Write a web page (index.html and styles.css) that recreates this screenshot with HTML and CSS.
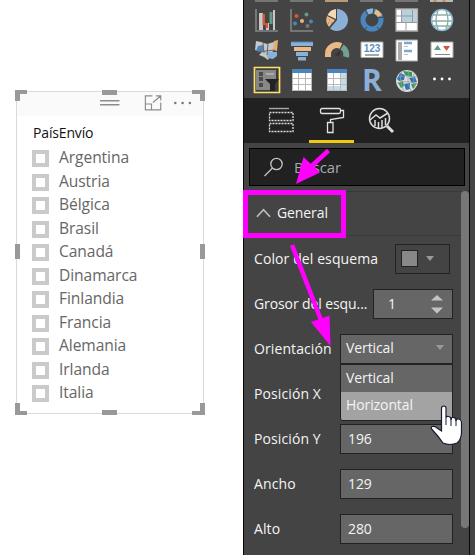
FILE: index.html
```html
<!DOCTYPE html>
<html lang="es">
<head>
<meta charset="utf-8">
<title>Formato</title>
<link rel="stylesheet" href="styles.css">
</head>
<body>
<div class="app">
  <main class="canvas">
    <section class="slicer">
      <header class="slicer-bar">
        <svg width="106" height="22" viewBox="0 0 106 22" fill="none" stroke="#8c8c8c">
          <path d="M0 7.700H20M0 11.800H20" stroke-width="1.400"/>
          <path d="M54 2.700H46.700V17H62.500V9.500M46.700 11H53V17M54.500 9.500L62 3M57.500 2.700H62.500V7.500" stroke-width="1.200"/>
          <g fill="#777" stroke="none"><circle cx="77.500" cy="10" r="1.300"/><circle cx="85" cy="10" r="1.300"/><circle cx="92.500" cy="10" r="1.300"/></g>
        </svg>
      </header>
      <h1 class="slicer-title">PaísEnvío</h1>
      <ul class="options">
        <li><i class="box"></i><span>Argentina</span></li>
        <li><i class="box"></i><span>Austria</span></li>
        <li><i class="box"></i><span>Bélgica</span></li>
        <li><i class="box"></i><span>Brasil</span></li>
        <li><i class="box"></i><span>Canadá</span></li>
        <li><i class="box"></i><span>Dinamarca</span></li>
        <li><i class="box"></i><span>Finlandia</span></li>
        <li><i class="box"></i><span>Francia</span></li>
        <li><i class="box"></i><span>Alemania</span></li>
        <li><i class="box"></i><span>Irlanda</span></li>
        <li><i class="box"></i><span>Italia</span></li>
      </ul>
      <svg class="handles" width="190" height="325" viewBox="0 0 190 325" fill="#999">
        <path d="M0 0H12V4H5V11H0ZM177 0H190V11H185V4H177ZM0 313H5V321H12V325H0ZM185 313H190V325H177V321H185ZM87 0H102V5H87ZM87 320H102V325H87ZM0 154H5V169H0ZM185 154H190V169H185Z"/>
      </svg>
    </section>
  </main>

  <aside class="pane">
    <div class="gallery">
      <svg class="sliver" width="210" height="3" viewBox="0 0 210 3">
        <path d="M6 1H29M41 1H64M111 1H134M146 1H169" stroke="#858585" stroke-width="1.500"/>
        <path d="M76 1H99" stroke="#b99b78" stroke-width="2"/><path d="M181 1H204" stroke="#b9b9b9" stroke-width="2"/><path d="M186 0V2M195 0V2" stroke="#c88d54" stroke-width="3"/>
      </svg>
      <svg viewBox="-14 -14 28 28"><path d="M-11-11V11H11" fill="none" stroke="#858585" stroke-width="1.600"/><path d="M-8-7H-4V10H-8ZM6-10H8V10H6ZM-1 3H2V10H-1Z" fill="#c8c8c8"/><path d="M-4.500-6H-2V3H1V8H-1.500V5H-4.500Z" fill="#d3573c"/><path d="M2.500-8H5.500V4H2.500Z" fill="#609c86"/></svg>
      <svg viewBox="-14 -14 28 28"><path d="M-11-11V11H11" fill="none" stroke="#858585" stroke-width="1.600"/><circle cx="-5.500" cy="-4" r="2" fill="#d3573c"/><circle cx="9" cy="1.500" r="2" fill="#4a86bd"/><circle cx="4.500" cy="-5.500" r="2" fill="#609c86"/><circle cx="0" cy="1" r="2" fill="#e6b982"/><circle cx="-7" cy="3.500" r="2" fill="#4a86bd"/><circle cx="5.500" cy="6" r="2" fill="#777"/></svg>
      <svg viewBox="-14 -14 28 28"><path d="M0 0V-11A11 11 0 1 1-7 8.500Z" fill="#8bb0d8"/><path d="M-1-1L-9.500-5A11 11 0 0 1-1-11Z" fill="#f3d9b5"/><path d="M-2 0L-8 7A11 11 0 0 1-10-4Z" fill="#e9b987"/><path d="M-8 0h1M-6 3h1M-9 3h1" stroke="#a67"/></svg>
      <svg viewBox="-14 -14 28 28" fill="none" stroke-width="5"><circle r="9" stroke="#4a86bd"/><path d="M-4.500-7.800A9 9 0 0 1 1-9" stroke="#91b4da"/><path d="M3-8.500A9 9 0 0 1 8-4" stroke="#e9b987"/><path d="M2-12L1-6M12-3L6-2M-7-11L-4-5M5 7L9 11M-5 7L-8 10" stroke="#444" stroke-width="1"/></svg>
      <svg viewBox="-14 -14 28 28"><path d="M-11-11H10.500V11H-11Z" fill="#fff" stroke="#aaa" stroke-width="1.300"/><path d="M-5-10H5V2H-5ZM6-10H10V2H6Z" fill="#b9d0df"/><path d="M-5.500-10V2M5.500-10V2M-11 2.500H10M-5-4H5M-1 3V10M-11-4H-5" stroke="#999"/></svg>
      <svg viewBox="-14 -14 28 28"><circle r="10.500" fill="#fff" stroke="#87b8da" stroke-width="1.500"/><path d="M-9-5H9M-10 1H10M-9 6H9M-4-9Q-8 0-4 9M4-9Q8 0 4 9" fill="none" stroke="#8ab0a5" stroke-width="1.400"/></svg>

      <svg viewBox="-14 -14 28 28"><path d="M-11-9L-6-8L0-6L7-8L8-2L4 4L1 10L-3 7L-8 5L-5 2L-12 0Z" fill="#c8c8c8"/><path d="M-9-4L-4-5L-3 1H-11Z" fill="#4a86bd"/><path d="M0 2L10 2V6L6 9L0 8Z" fill="#8bb0d8"/><path d="M7-9L11-10L10 1L6 0Z" fill="#e3ae72"/><path d="M-4-7L-3 3M1-7L0 5M-10 2L8 0" stroke="#666"/></svg>
      <svg viewBox="-14 -14 28 28"><path d="M-11-8H11V-4H-11ZM-6 2H6V6H-6ZM-4 7H4V10.500H-4Z" fill="#8bb0d8"/><path d="M-11-8H11" stroke="#4a86bd"/><path d="M-8-3H9V1H-8Z" fill="#e9b987"/></svg>
      <svg viewBox="-14 -14 28 28" fill="none" stroke-width="6"><path d="M-9 7V4.500A9 9 0 0 1 4-4" stroke="#e9b987"/><path d="M5-3A9 9 0 0 1 9 7" stroke="#70a28e"/><path d="M-2 5L4 0L2 6Z" fill="#333" stroke="none"/></svg>
      <svg viewBox="-14 -14 28 28"><path d="M-11-8H11V7.500H-11Z" fill="#fff" stroke="#aaa"/><text class="card-num" x="0" y="2">123</text><path d="M-7 5H7" stroke="#777" stroke-width="1.300"/></svg>
      <svg viewBox="-14 -14 28 28"><path d="M-11-10H10.500V11H-11Z" fill="#fff" stroke="#aaa"/><path d="M-9-8H-5V10H-9Z" fill="#aaa"/><path d="M-3-7H5M-3 1H5" stroke="#7ba8d2" stroke-width="2.500"/><path d="M-3-3.500H1M-3 4.500H1" stroke="#bbb"/></svg>
      <svg viewBox="-14 -14 28 28"><path d="M-11-8H11V7.500H-11Z" fill="#fff" stroke="#aaa"/><path d="M-8 0L-4.500-5L-1 0Z" fill="#609c86"/><path d="M1-4H8L4.500 1Z" fill="#d3573c"/><path d="M-7 4.500H8" stroke="#888"/></svg>

      <svg viewBox="-14 -14 28 28"><path d="M-12.500-12.500H12.500V12.500H-12.500Z" fill="#3c3c3c" stroke="#ffe169" stroke-width="1.700"/><path d="M-11-10H9V-1H4L7 10H-11Z" fill="#888"/><path d="M-8-8H-4V-4H-8ZM-8-3H-4V1H-8ZM-8 3H-4V7H-8Z" fill="#4b4b4b"/><path d="M-1-6H7" stroke="#aaa" stroke-width="2"/><path d="M-2-1H12L8 4V11H3V4Z" fill="#222"/></svg>
      <svg viewBox="-14 -14 28 28"><path d="M-10-11H10V11H-10Z" fill="#fff"/><path d="M-10-11H10V-7H-10Z" fill="#4a86bd"/><path d="M-9.500-7V10.500H9.500V-7M-3.500-7V11M3.500-7V11M-10-1.500H10M-10 4.500H10" fill="none" stroke="#b8b8b8"/></svg>
      <svg viewBox="-14 -14 28 28"><path d="M-10-11H10V11H-10Z" fill="#fff"/><path d="M4-7H10V11H-10V6H4Z" fill="#c5dbe6"/><path d="M-10-11H10V-7H-10Z" fill="#4a86bd"/><path d="M-9.500-7V10.500H9.500V-7M-3.500-7V11M3.500-7V11M-10-1.500H10M-10 4.500H10" fill="none" stroke="#b8b8b8"/></svg>
      <span class="r-mark">R</span>
      <svg viewBox="-14 -14 28 28"><circle cx="0" cy="1" r="11" fill="#ddd"/><path d="M-10-1L-7-7L-2-5L-3 0L-8 1ZM2-2L8-3L10 2L5 3ZM-3 4L3 3L3 9L-1 10Z" fill="#2b76b9"/><path d="M-4-9L5-8L5-3L-1-4ZM-9 3L-4 1L-3 6L-6 8ZM4 4L10 3L6 9Z" fill="#319b57"/><path d="M-10-3Q1-6 10-3M-10 3Q1 0 10 4M-5-9Q-9 1-3 11M2-10Q-1 1 4 11M7-7Q6 1 8 8" fill="none" stroke="#999" stroke-width=".8"/></svg>
      <svg viewBox="-14 -14 28 28" fill="#fff"><circle cx="-7.500" cy="-1" r="1.400"/><circle cx="0" cy="-1" r="1.400"/><circle cx="7.500" cy="-1" r="1.400"/></svg>
    </div>

    <nav class="tabs">
      <div class="tab"><svg viewBox="0 0 30 30" fill="none" stroke="#ddd"><path d="M2 2.500H22" stroke="#aaa" stroke-width="1.400"/><path d="M2.500 6.500H26V14.500H2.500ZM2.500 17.500H26V25.500H2.500Z" stroke-width="1.300" stroke-dasharray="2 1"/></svg></div>
      <div class="tab active"><svg viewBox="0 0 30 30" fill="none" stroke="#e2e2e2" stroke-width="1.300"><path d="M5 2.500H22Q23.500 2.500 23.500 4V5.500Q23.500 7.500 22 7.500H5Q3.500 7.500 3.500 5.500V4Q3.500 2.500 5 2.500ZM23.500 4.500H26.500V11.500L13.500 13.500V16.500M10.500 16.500H16V26.500H10.500Z"/></svg></div>
      <div class="tab"><svg viewBox="0 0 30 30" fill="none" stroke="#ddd" stroke-width="1.500"><circle cx="12.500" cy="12.500" r="10"/><path d="M20 20L26 26" stroke-width="3"/><path d="M3 14L9 9L13 12L21 7M8 14V20M11.500 16V22M15 14V22M18.500 12V19"/></svg></div>
    </nav>

    <div class="search">
      <svg width="22" height="22" viewBox="0 0 22 22" fill="none" stroke="#c4c4c4" stroke-width="1.300"><circle cx="13.500" cy="8" r="5.700"/><path d="M9.500 12L1.500 20"/></svg>
      <span>Buscar</span>
    </div>

    <div class="settings">
      <div class="group"><svg width="15" height="10" viewBox="0 0 16 10"><path d="M1 9L8 1.500L15 9" fill="none" stroke="#bbb" stroke-width="1.900"/></svg><span>General</span></div>
      <div class="row"><label>Color del esquema</label><div class="swatch"><i class="chip"></i><i class="caret"></i></div></div>
      <div class="row"><label class="clipped">Grosor del esqu...</label><div class="field stepper"><span>1</span><svg width="14" height="22" viewBox="0 0 14 22" fill="#c4c4c4"><path d="M1 7.500L7 2L13 7.500ZM1 14.500H13L7 20.500Z"/></svg></div></div>
      <div class="row"><label>Orientación</label>
        <div class="field select"><span>Vertical</span><i class="caret"></i>
          <div class="menu"><div>Vertical</div><div class="hover">Horizontal</div></div>
        </div>
      </div>
      <div class="row"><label>Posición X</label><div class="field"></div></div>
      <div class="row"><label>Posición Y</label><div class="field">196</div></div>
      <div class="row"><label>Ancho</label><div class="field">129</div></div>
      <div class="row"><label>Alto</label><div class="field">280</div></div>
    </div>
    <div class="scrollbar"></div>
  </aside>
  <div class="edge"></div>

  <svg class="marks" width="475" height="555" viewBox="0 0 475 555">
    <g fill="none" stroke="#f0f" stroke-width="5"><path d="M245.500 192.500H343.500V235.500H245.500Z"/><path d="M328.500 150.500L309 168.500M292 245L321 320" stroke-width="4.500"/></g>
    <path d="M296 184L303.500 157L320 172.500ZM330.500 346L311 322L329.500 315.500Z" fill="#f0f"/>
    <path d="M441.500 408.500Q441.500 406 443.800 406T446 408.500V418Q446 416 448.500 416.500T451 419V420Q451 417 453.500 417.500T456 420V421Q456 418.500 458.500 419T461.500 422V433Q461 440 457 443Q450 446 443 443Q439 437 432.500 430Q430 427 432.500 426.500T437 428L441.500 431Z" fill="#fff" stroke="#161b35" stroke-width="1.200"/>
    <path d="M446 418V425M451 419V426M456 420V426" stroke="#161b35"/>
  </svg>
</div>
</body>
</html>
```

FILE: styles.css
```css
* { box-sizing: border-box; }
body { margin: 0; background: #fff; font-family: "Open Sans", "Noto Sans", sans-serif; }
i { display: block; }
.app { position: relative; display: flex; width: 475px; height: 555px; overflow: hidden; }
.canvas { width: 243px; padding: 90px 0 0 15px; }

.slicer { position: relative; width: 190px; height: 325px; padding: 2px; }
.slicer::before { content: ""; position: absolute; inset: 1px; border: 1px solid #dadada; }
.slicer-bar { display: flex; height: 24px; padding: 1px 0 0 83px; background: #fafafa; }
.slicer-title { margin: 6px 0 0 16px; height: 23px; font-size: 14px; line-height: 21px; font-weight: 400; color: #111; letter-spacing: -.15px; }
.options { list-style: none; margin: 2px 0 0; padding: 0 0 0 15px; }
.options li { display: flex; align-items: center; gap: 10px; height: 23.500px; font-size: 15.600px; line-height: 23px; letter-spacing: -.08px; color: #666; }
.options span { position: relative; top: -1px; }
.box { width: 17px; height: 17px; border: 4px solid #cacaca; background: #fff; }
.handles { position: absolute; left: 0; top: 0; }

.pane { position: relative; width: 227px; background: #444; border: solid #080808; border-width: 0 1px; color: #f4f4f4; overflow: hidden; }
.gallery { position: relative; display: grid; grid-template-columns: repeat(6, 35px); grid-auto-rows: 30px; place-items: center; height: 98px; padding: 5px 0 0 5px; }
.gallery svg { width: 28px; height: 28px; }
.gallery .sliver { position: absolute; left: 5px; top: 0; width: 210px; height: 3px; }
.card-num { font: bold 10px "Liberation Sans", sans-serif; fill: #5a8fc4; text-anchor: middle; }
.r-mark { font-size: 30px; line-height: 42px; font-weight: 700; letter-spacing: -1px; color: #8bb0d8; }

.tabs { display: flex; gap: 5px; height: 45px; padding-left: 15px; background: #212121; }
.tab { width: 45px; height: 45px; padding: 8px 0 0 8px; border-bottom: 3px solid transparent; }
.tab.active { border-color: #f2c811; }
.tab svg { display: block; width: 30px; height: 30px; }

.search { display: flex; align-items: center; gap: 9px; width: 216px; height: 38px; margin: 5px 0 5px 5px; padding-left: 13px; border: 1px solid #000; background: #212121; color: #aaa; font-size: 14.800px; }

.settings { border-top: 1px solid #393939; font-size: 14px; letter-spacing: -.1px; }
.group { display: flex; align-items: center; gap: 6px; height: 44px; padding: 0 0 2px 12px; border-bottom: 1px solid #393939; }
.row { display: flex; align-items: center; justify-content: space-between; height: 45px; padding: 0 16px 0 10px; white-space: nowrap; }
.row label { letter-spacing: .1px; }
.row .clipped { letter-spacing: -.1px; }
.field { display: flex; align-items: center; position: relative; width: 113px; height: 30px; padding-left: 7px; border: 1px solid #222; background: #666; }
.stepper { width: 80px; padding: 0 8px 0 14px; justify-content: space-between; }
.select { padding: 0 8px 2px 5px; justify-content: space-between; }
.swatch { display: flex; align-items: center; gap: 8px; width: 55px; height: 30px; margin-right: 3px; padding-left: 5px; border: 1px solid #222; }
.chip { width: 17px; height: 17px; border: 1px solid #222; background: #888; }
.caret { border: solid transparent; border-width: 5px 4.500px 0; border-top-color: #999; }
.menu { position: absolute; z-index: 1; left: -1px; top: 29px; width: 113px; height: 57px; border: 1px solid #222; border-radius: 0 0 3px 3px; background: #666; overflow: hidden; }
.menu div { height: 27px; padding-left: 5px; line-height: 25px; }
.menu .hover { height: 28px; background: #a3a3a3; }
.scrollbar { position: absolute; right: 0; top: 191px; width: 8px; height: 337px; border-radius: 4px; background: #777; }
.edge { width: 5px; background: #444; }
.marks { position: absolute; left: 0; top: 0; z-index: 3; }
```
